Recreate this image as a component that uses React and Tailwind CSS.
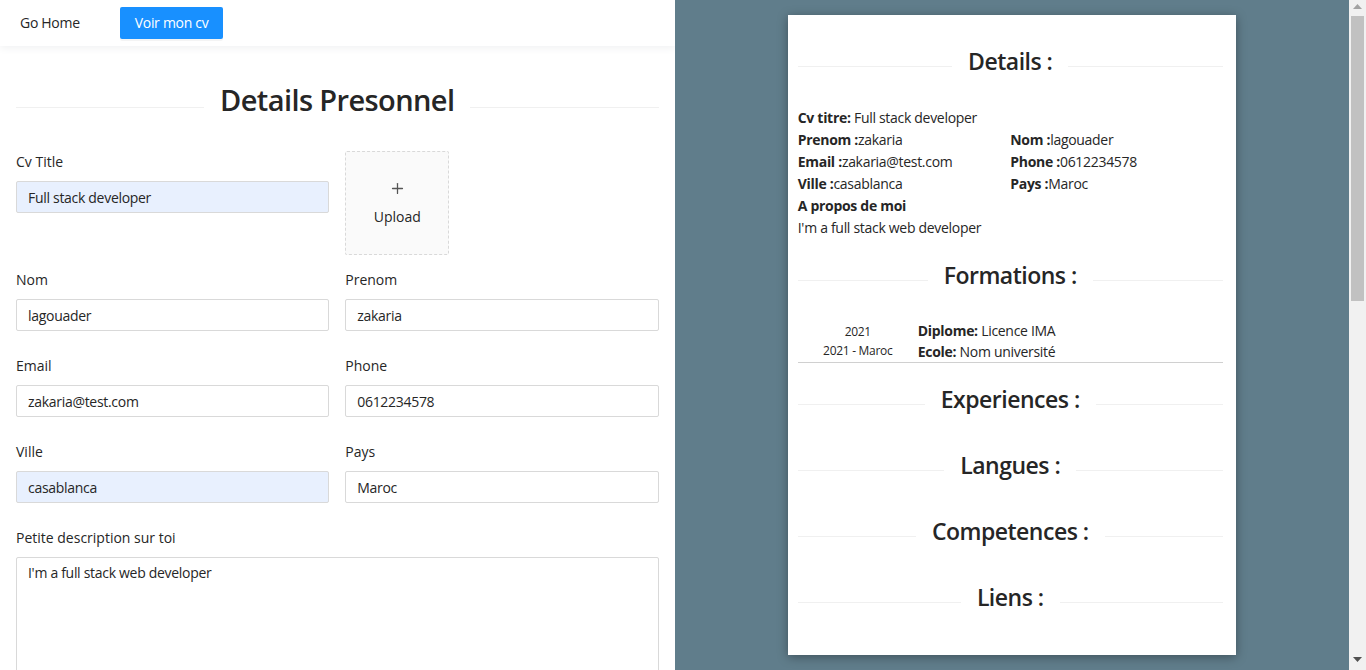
import { Plus } from 'lucide-react'

const FONT = { fontFamily: '"Open Sans", "Noto Sans", sans-serif' }

function Divider({ title, big }) {
  return (
    <div className="flex items-center">
      <div className="flex-1 h-px bg-[#f0f0f0]" />
      <h2
        className={
          big
            ? 'px-4 text-[29px] leading-[40px] mb-[14px] font-semibold tracking-[-0.6px] text-[#262626]'
            : 'px-4 text-[23px] leading-[32px] mb-[10px] font-semibold tracking-[-0.5px] text-[#262626]'
        }
      >
        {title}
      </h2>
      <div className="flex-1 h-px bg-[#f0f0f0]" />
    </div>
  )
}

function Field({ label, value, filled }) {
  return (
    <div>
      <label className="block text-sm leading-[22px] text-[#262626] mb-2">{label}</label>
      <input
        readOnly
        value={value}
        className={`w-full h-8 px-[11px] text-sm tracking-[-0.3px] text-[#262626] border border-[#d9d9d9] rounded-[2px] outline-none ${
          filled ? 'bg-[#e8f0fe]' : 'bg-white'
        }`}
      />
    </div>
  )
}

function Form() {
  return (
    <div className="px-4 pt-[34px]">
      <Divider title="Details Presonnel" big />

      <div className="grid grid-cols-2 gap-x-4 mt-[17px] mb-[14px]">
        <Field label="Cv Title" value="Full stack developer" filled />
        <div className="w-[104px] h-[104px] border border-dashed border-[#d9d9d9] bg-[#fafafa] rounded-[2px] flex flex-col items-center justify-center">
          <Plus size={17} strokeWidth={1.8} className="text-[#555]" />
          <div className="mt-[10px] text-sm text-[#262626]">Upload</div>
        </div>
      </div>

      <div className="grid grid-cols-2 gap-x-4 gap-y-6">
        <Field label="Nom" value="lagouader" />
        <Field label="Prenom" value="zakaria" />
        <Field label="Email" value="zakaria@test.com" />
        <Field label="Phone" value="0612234578" />
        <Field label="Ville" value="casablanca" filled />
        <Field label="Pays" value="Maroc" />
      </div>

      <div className="mt-6">
        <label className="block text-sm leading-[22px] text-[#262626] mb-2">Petite description sur toi</label>
        <textarea
          readOnly
          value="I'm a full stack web developer"
          className="w-full h-[160px] px-[11px] py-1 text-sm leading-[22px] tracking-[-0.3px] text-[#262626] border border-[#d9d9d9] rounded-[2px] outline-none resize-none"
        />
      </div>
    </div>
  )
}

function CvPreview() {
  return (
    <div className="w-[448px] h-[640px] bg-white pl-[10px] pr-[13px] pt-[30px] shadow-[0_2px_10px_rgba(0,0,0,0.35)] text-sm tracking-[-0.3px] text-[#262626]">
      <Divider title="Details :" />

      <div className="mt-5 leading-[22px]">
        <div><b className="font-bold">Cv titre:</b> Full stack developer</div>
        <div className="grid grid-cols-2">
          <div><b className="font-bold">Prenom :</b>zakaria</div>
          <div><b className="font-bold">Nom :</b>lagouader</div>
          <div><b className="font-bold">Email :</b>zakaria@test.com</div>
          <div><b className="font-bold">Phone :</b>0612234578</div>
          <div><b className="font-bold">Ville :</b>casablanca</div>
          <div><b className="font-bold">Pays :</b>Maroc</div>
        </div>
        <div className="font-bold">A propos de moi</div>
        <div>I'm a full stack web developer</div>
      </div>

      <div className="mt-5">
        <Divider title="Formations :" />
      </div>
      <div className="mt-[19px] flex border-b border-[#d0d0d0]">
        <div className="w-[120px] flex flex-col items-center justify-center text-xs leading-[19px]">
          <div>2021</div>
          <div>2021 - Maroc</div>
        </div>
        <div className="leading-[21px]">
          <div><b className="font-bold">Diplome:</b> Licence IMA</div>
          <div><b className="font-bold">Ecole:</b> Nom université</div>
        </div>
      </div>

      <div className="mt-5">
        <Divider title="Experiences :" />
      </div>
      <div className="mt-6">
        <Divider title="Langues :" />
      </div>
      <div className="mt-6">
        <Divider title="Competences :" />
      </div>
      <div className="mt-6">
        <Divider title="Liens :" />
      </div>
    </div>
  )
}

// page scrollbar as it shows in the screenshot
function Scrollbar() {
  return (
    <div className="w-[17px] h-full bg-[#f1f1f1] flex flex-col items-center">
      <svg width="9" height="5" viewBox="0 0 9 5" className="mt-[4px]">
        <polygon points="4.5,0 9,5 0,5" fill="#a3a3a3" />
      </svg>
      <div className="mt-[7px] w-[13px] h-[285px] bg-[#c1c1c1]" />
      <div className="flex-1" />
      <svg width="9" height="5" viewBox="0 0 9 5" className="mb-[8px]">
        <polygon points="0,0 9,0 4.5,5" fill="#505050" />
      </svg>
    </div>
  )
}

export default function App() {
  return (
    <div className="flex h-screen overflow-hidden bg-white" style={FONT}>
      <div className="flex-1 flex">
        {/* left: form */}
        <div className="w-1/2 overflow-hidden">
          <nav className="h-[46px] flex items-center px-5 bg-white shadow-[0_2px_8px_#f0f1f2] relative">
            <a className="text-sm tracking-[-0.3px] text-[#262626]">Go Home</a>
            <button className="ml-10 h-8 px-[15px] bg-[#1890ff] text-white text-sm tracking-[-0.3px] rounded-[2px] shadow-[0_2px_0_rgba(0,0,0,0.045)]">
              Voir mon cv
            </button>
          </nav>
          <Form />
        </div>

        {/* right: cv preview */}
        <div className="w-1/2 bg-[#607d8b] flex justify-center pt-[15px]">
          <CvPreview />
        </div>
      </div>
      <Scrollbar />
    </div>
  )
}
